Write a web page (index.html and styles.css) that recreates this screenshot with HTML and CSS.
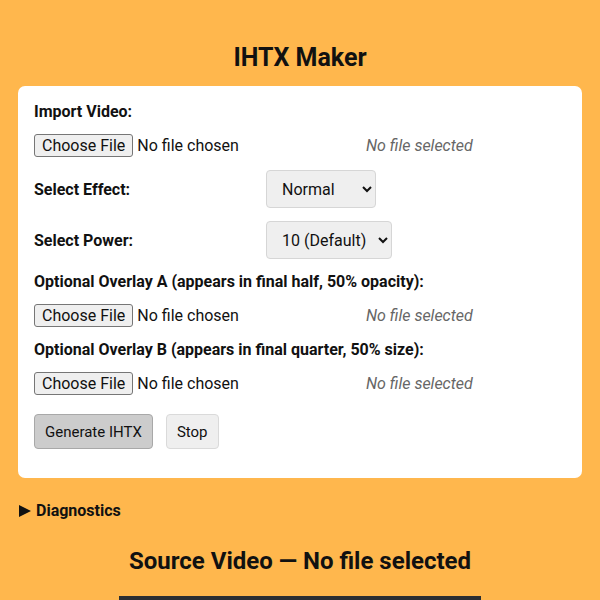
FILE: index.html
```html
<!DOCTYPE html>
<html lang="en">
<head>
<meta charset="utf-8">
<title>IHTX Maker</title>
<link rel="stylesheet" href="styles.css">
</head>
<body>
<h1 class="title">IHTX Maker</h1>
<div class="card">
  <div class="label">Import Video:</div>
  <div class="file-row">
    <input type="file" class="file" accept="video/*">
    <span class="status">No file selected</span>
  </div>
  <div class="opt-row">
    <span class="label opt-label">Select Effect:</span>
    <select class="select select-effect"><option>Normal</option><option>Wide</option></select>
  </div>
  <div class="opt-row">
    <span class="label opt-label">Select Power:</span>
    <select class="select"><option>10 (Default)</option><option>5</option></select>
  </div>
  <div class="label">Optional Overlay A (appears in final half, 50% opacity):</div>
  <div class="file-row">
    <input type="file" class="file" accept="image/*">
    <span class="status">No file selected</span>
  </div>
  <div class="label">Optional Overlay B (appears in final quarter, 50% size):</div>
  <div class="file-row">
    <input type="file" class="file" accept="image/*">
    <span class="status">No file selected</span>
  </div>
  <div class="btn-row">
    <button class="btn btn-primary">Generate IHTX</button>
    <button class="btn btn-stop">Stop</button>
  </div>
</div>
<details class="diag">
  <summary class="diag-summary">Diagnostics</summary>
  <pre class="diag-log"></pre>
</details>
<h2 class="subtitle">Source Video — No file selected</h2>
<div class="video-box"></div>
</body>
</html>
```
FILE: styles.css
```css
html, body {
  margin: 0;
  padding: 0;
}
body {
  background: #FFB74D;
  font-family: Roboto, "Liberation Sans", Arial, sans-serif;
  font-size: 16px;
  color: #111;
  padding: 0 18px;
}
.title {
  margin: 43px 0 13px;
  font-size: 25px;
  line-height: 30px;
  font-weight: 700;
  text-align: center;
}
.card {
  background: #fff;
  border-radius: 7px;
  padding: 16px 16px 29px;
  display: flex;
  flex-direction: column;
  gap: 13px;
}
.label {
  font-weight: 700;
  line-height: 19px;
}
.file-row {
  display: flex;
  align-items: center;
  height: 23px;
}
.file {
  font: inherit;
  font-size: 16px;
  width: 320px;
  color: #111;
}
.file::file-selector-button {
  font: inherit;
  font-size: 16px;
  padding: 1px 7px;
  margin-right: 4px;
  background: #efefef;
  border: 1px solid #767676;
  border-radius: 3px;
  color: #111;
}
.status {
  margin-left: 12px;
  font-style: italic;
  color: #666;
}
.opt-row {
  display: flex;
  align-items: center;
}
.opt-label {
  width: 232px;
}
.select {
  font: inherit;
  font-size: 16px;
  height: 38px;
  padding: 0 8px 0 11px;
  background: #efefef;
  border: 1px solid #d6d6d6;
  border-radius: 4px;
  color: #111;
}
.select-effect {
  width: 110px;
}
.btn-row {
  display: flex;
  gap: 13px;
  margin-top: 6px;
}
.btn {
  font: inherit;
  font-size: 15px;
  height: 35px;
  padding: 0 10px;
  border-radius: 4px;
  color: #111;
}
.btn-primary {
  background: #cccccc;
  border: 1px solid #a8a8a8;
}
.btn-stop {
  background: #efefef;
  border: 1px solid #dadada;
}
.diag {
  margin-top: 23px;
}
.diag-summary {
  list-style: none;
  font-weight: 700;
  line-height: 19px;
  cursor: pointer;
  display: flex;
  align-items: center;
}
.diag-summary::-webkit-details-marker {
  display: none;
}
.diag-summary::before {
  content: "";
  display: inline-block;
  width: 0;
  height: 0;
  border-left: 12px solid #111;
  border-top: 6.5px solid transparent;
  border-bottom: 6.5px solid transparent;
  margin-left: 1px;
  margin-right: 5px;
}
.diag-log {
  margin: 0;
}
.subtitle {
  margin: 26px 0 20px;
  font-size: 24px;
  line-height: 30px;
  font-weight: 700;
  text-align: center;
}
.video-box {
  width: 362px;
  height: 200px;
  margin: 0 auto;
  background: #2b2e32;
}
```
